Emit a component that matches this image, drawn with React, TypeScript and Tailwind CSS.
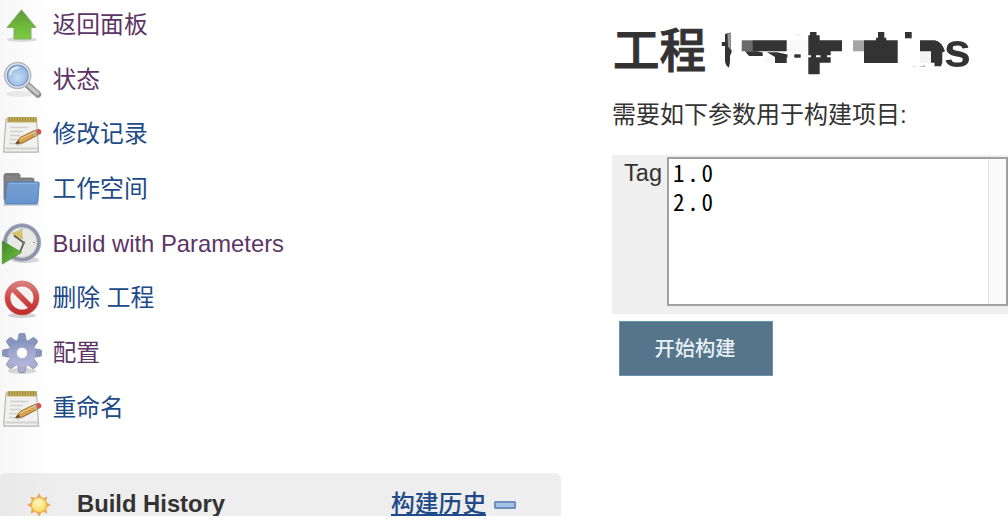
import type { ReactNode } from "react";

type Task = {
  label: string;
  icon: ReactNode;
  visited?: boolean;
};

function UpIcon() {
  return (
    <>
      <defs>
        <linearGradient id="up" x1="0" y1="0" x2="0" y2="1">
          <stop offset="0" stopColor="#5d9a3c" />
          <stop offset="0.5" stopColor="#6cb53a" />
          <stop offset="1" stopColor="#7fcb45" />
        </linearGradient>
      </defs>
      <ellipse cx="22" cy="42.500" rx="15" ry="2.5" fill="#000" opacity="0.13" />
      <path d="M21.5 12.8 36 30.500H31V42H14V30.500H7Z" fill="url(#up)" stroke="#7fae65" strokeWidth="1" strokeLinejoin="round" />
    </>
  );
}

function SearchIcon() {
  return (
    <>
      <defs>
        <radialGradient id="lens" cx="0.5" cy="0.6" r="0.6">
          <stop offset="0" stopColor="#c5dcf4" />
          <stop offset="1" stopColor="#8fb2dd" />
        </radialGradient>
      </defs>
      <ellipse cx="20" cy="43" rx="14" ry="3" fill="#000" opacity="0.07" />
      <path d="M27.500 34 38 43.500" stroke="#929292" strokeWidth="6.5" strokeLinecap="round" />
      <path d="M29 35 37.500 42.500" stroke="#c9c9c9" strokeWidth="3.5" strokeLinecap="round" />
      <circle cx="17.7" cy="24.500" r="13" fill="#e9ecef" stroke="#b4b9be" strokeWidth="1.6" />
      <circle cx="17.7" cy="24.500" r="10.500" fill="url(#lens)" stroke="#7896c3" strokeWidth="1.2" />
      <path d="M10 24Q11 16.500 19 16.500" fill="none" stroke="#e3effb" strokeWidth="2" />
    </>
  );
}

function NotepadIcon() {
  return (
    <>
      <path d="M3 45H39.500V47H3Z" fill="#000" opacity="0.15" />
      <path d="M6 13H36.500L38.500 43.500Q38.500 46 36.500 46H5.500Q3.500 46 3.700 43.500Z" fill="#f1f1f0" stroke="#b3b3b1" strokeWidth="1.1" />
      <path d="M4.500 42.500H38" stroke="#d2d2d0" strokeWidth="2" />
      <path d="M7.500 11H36.500V16.500H7Z" fill="#c5b263" />
      <path d="M8.500 13.500H36.500" stroke="#9c8738" strokeWidth="4.5" strokeDasharray="1.2 1.500" />
      <path d="M10 21.500H28M10 25.500H23M10 29.500H20M9.500 33.500H17M9 37.500H15" stroke="#cfcfcf" strokeWidth="1.3" />
      <path d="M17 39.500 31 32" stroke="#aaa" strokeWidth="2.5" opacity="0.5" />
      <path d="M15.500 38 20 31.500 35.500 24 38 29 22.500 37Z" fill="#d7a04d" stroke="#9d7337" strokeWidth="1" />
      <path d="M20 33 36 25.500" stroke="#efc987" strokeWidth="1.2" />
      <path d="M15.500 38 18.200 34.200 20 37Z" fill="#5d4630" />
      <path d="M34 24.700 36.300 29.700" stroke="#b9b9b9" strokeWidth="2" />
      <path d="M36 24Q39.500 22 41 24.500Q42.500 27.500 38.500 29Z" fill="#d4524a" />
    </>
  );
}

function FolderIcon() {
  return (
    <>
      <defs>
        <linearGradient id="folder" x1="0" y1="0" x2="0" y2="1">
          <stop offset="0" stopColor="#75a0d5" />
          <stop offset="1" stopColor="#6794cd" />
        </linearGradient>
      </defs>
      <path d="M3 43H39V45H3Z" fill="#000" opacity="0.14" />
      <path d="M4 14.500Q4 12.500 6 12.500H18Q20 12.500 20 14.500V17H32Q34 17 34 19V40H6Q4 40 4 38Z" fill="#7d7d7d" stroke="#727272" strokeWidth="0.8" />
      <path d="M5.500 16H18M5.500 19H32" stroke="#909090" strokeWidth="1" />
      <path d="M8.500 21H38Q39.300 21 39.200 22.500L37.800 41.500Q37.700 43 36 43H6Q4.500 43 4.800 41.500L7.200 22.500Q7.300 21 8.500 21Z" fill="url(#folder)" stroke="#5580ba" strokeWidth="1" />
      <path d="M9 22.500H37.500" stroke="#8bb0df" strokeWidth="1" />
    </>
  );
}

function ClockIcon() {
  return (
    <>
      <defs>
        <linearGradient id="play" x1="0" y1="0" x2="1" y2="1">
          <stop offset="0" stopColor="#438529" />
          <stop offset="1" stopColor="#6fc93d" />
        </linearGradient>
      </defs>
      <ellipse cx="25" cy="45" rx="14" ry="3" fill="#000" opacity="0.15" />
      <circle cx="22" cy="27.500" r="17" fill="#e8e8e5" stroke="#8f92ab" strokeWidth="3.6" />
      <circle cx="22" cy="27.500" r="18.700" fill="none" stroke="#a9acc0" strokeWidth="0.8" />
      <circle cx="22" cy="27.500" r="14.800" fill="none" stroke="#c6c6c9" strokeWidth="0.8" />
      <path d="M12 18.500 21.500 15 22.500 24Z" fill="#dcc568" stroke="#c8b45f" strokeWidth="0.7" />
      <path d="M14 20.500 23.500 27.500M24 27.500 20 37" stroke="#5c5c55" strokeWidth="1.800" />
      <circle cx="23.500" cy="27.500" r="1.600" fill="#77766b" />
      <path d="M33 27.500H35M22 13.500V15" stroke="#999" strokeWidth="1.200" />
      <path d="M2.300 26 21.500 37.500 2.300 49Z" fill="url(#play)" stroke="#4b8d34" strokeWidth="0.8" />
    </>
  );
}

function StopIcon() {
  return (
    <>
      <defs>
        <linearGradient id="stop" gradientUnits="userSpaceOnUse" x1="0" y1="10" x2="0" y2="45">
          <stop offset="0" stopColor="#dc8784" />
          <stop offset="0.5" stopColor="#cf4c48" />
          <stop offset="1" stopColor="#bf2a29" />
        </linearGradient>
      </defs>
      <ellipse cx="22" cy="45.500" rx="14" ry="2.500" fill="#000" opacity="0.16" />
      <circle cx="22" cy="28" r="14.300" fill="#f4f2f2" stroke="url(#stop)" strokeWidth="5.500" />
      <path d="M12.500 18.500 31.500 37.500" stroke="url(#stop)" strokeWidth="5.500" />
      <circle cx="22" cy="28" r="17" fill="none" stroke="#c45b58" strokeWidth="0.6" />
    </>
  );
}

const RAYS = [0, 45, 90, 135, 180, 225, 270, 315];

function GearIcon() {
  return (
    <>
      <defs>
        <linearGradient id="gear" gradientUnits="userSpaceOnUse" x1="20" y1="8" x2="24" y2="48">
          <stop offset="0" stopColor="#6d87b5" />
          <stop offset="0.5" stopColor="#a3a9d0" />
          <stop offset="1" stopColor="#b9bbdc" />
        </linearGradient>
      </defs>
      <ellipse cx="22" cy="46" rx="14" ry="3" fill="#000" opacity="0.15" />
      {RAYS.map((angle) => (
        <path
          key={angle}
          d="M17.500 17 18.800 9.500Q19 8.500 20 8.500H24Q25 8.500 25.200 9.500L26.500 17Z"
          transform={`rotate(${angle} 22 28)`}
          fill={angle > 90 && angle < 270 ? "#aaacd1" : "#8796c0"}
          stroke="#8089a8"
          strokeWidth="0.8"
        />
      ))}
      <circle cx="22" cy="28" r="9.700" fill="none" stroke="url(#gear)" strokeWidth="8" />
      <circle cx="22" cy="28" r="5.600" fill="#fff" stroke="#989fbf" strokeWidth="0.8" />
    </>
  );
}

function SunIcon() {
  return (
    <svg viewBox="0 0 26 26" className="mt-0.5 h-[26px] w-[26px] shrink-0">
      <defs>
        <radialGradient id="sun" cx="0.45" cy="0.35" r="0.7">
          <stop offset="0" stopColor="#fffbc4" />
          <stop offset="1" stopColor="#f6d34c" />
        </radialGradient>
      </defs>
      {RAYS.map((angle) => (
        <path key={angle} d="M10.300 6 13 1 15.700 6Z" transform={`rotate(${angle} 13 13)`} fill="#eaa95c" />
      ))}
      <circle cx="13" cy="13" r="7.700" fill="url(#sun)" stroke="#ecaf57" strokeWidth="1.200" />
    </svg>
  );
}

// Project name with most of its letters masked out
function MaskedName() {
  return (
    <svg viewBox="720 20 260 60" className="ml-[14px] h-[60px] w-[260px] shrink-0">
      <path d="M725 34 730.700 32.500V48L731.800 51.500 730 56V62L729 67.500Q725.500 66 725 61V46H721.800V42H725Z" fill="#333" />
      <path d="M727.500 34 730.700 32.700V50L728 46.500Z" fill="#999" />
      <path d="M787 40.300H808V51.300H787ZM764 57H775V63H764Z" fill="#f9f9f9" />
      <path d="M741.700 40.300H753V51.300H741.700Z" fill="#6b6b6b" />
      <path d="M752.700 40.300H786.700V51.300H752.700Z" fill="#333" />
      <path d="M745 51.300H757L762.700 52.500V56H749Z" fill="#333" />
      <path d="M767 52.300H777L787.500 54.500V57.500H786.700V63H775V57Z" fill="#333" />
      <path d="M794.300 54.300H800.700V57.700H794.300Z" fill="#333" />
      <path d="M795 34.500H801V35.300H795Z" fill="#ddd" />
      <path d="M810 32H816.500V35.300H819.700V40.300H842V51.300H830.700V62.700H819.700V74.300H808.300V35.300H810Z" fill="#333" />
      <path d="M808 55.300H811V57.300H808ZM816 55.300H820.500V57.300H816ZM827 55.300H831V57.300H827Z" fill="#fff" />
      <path d="M853 40.300H864V51.300H853Z" fill="#a5a5a5" />
      <path d="M878 32H884.300V37.700H886.300V40.300H897.700V63H864V40.300H876V37.700H878Z" fill="#333" />
      <path d="M905 32H911.700V38.300H905Z" fill="#333" />
      <path d="M920 51.300H931V63H920Z" fill="#f4f4f4" />
      <path d="M920 40.300H935Q942 42 945 51.300L942.300 52.500V62.700L941 66.300H934.500V62.700H931V51.300H920Z" fill="#333" />
      <path d="M918.500 66.500 925 65.500V66.500ZM912 66.500H915V66Z" fill="#777" />
      <text x="943.800" y="67" fontSize="49" fontWeight="700" fill="#333" className="font-['Liberation_Sans',sans-serif]">
        s
      </text>
    </svg>
  );
}

const tasks: Task[] = [
  { label: "返回面板", icon: <UpIcon />, visited: true },
  { label: "状态", icon: <SearchIcon />, visited: true },
  { label: "修改记录", icon: <NotepadIcon /> },
  { label: "工作空间", icon: <FolderIcon /> },
  { label: "Build with Parameters", icon: <ClockIcon />, visited: true },
  { label: "删除 工程", icon: <StopIcon /> },
  { label: "配置", icon: <GearIcon />, visited: true },
  { label: "重命名", icon: <NotepadIcon /> },
];

export default function App() {
  return (
    <div className="h-[530px] w-[1008px] overflow-hidden bg-white font-['Liberation_Sans','Noto_Sans_CJK_SC',sans-serif] text-[#333]">
      <div className="flex h-[516px] overflow-hidden">
        <aside className="w-[612px] shrink-0 bg-[linear-gradient(90deg,#f7f7f7,#fff_48px)]">
          <nav className="-mt-[3.300px] flex flex-col">
            {tasks.map((task) => (
              <a
                key={task.label}
                href="#"
                className={`flex h-[54.700px] items-center gap-[8.500px] text-[23.800px] leading-none whitespace-nowrap ${
                  task.visited ? "text-[#5c3566]" : "text-[#204a87]"
                }`}
              >
                <svg viewBox="0 0 44 54.700" className="h-[54.700px] w-[44px] shrink-0">
                  {task.icon}
                </svg>
                <span className="pt-[1.500px]">{task.label}</span>
              </a>
            ))}
          </nav>

          {/* Build history */}
          <section className="mt-[38.700px] flex h-[62px] w-[561px] items-center rounded-t-[6px] bg-gradient-to-r from-[#e9e9e9] to-[#eeeeee] to-10% pl-[26px] text-[23.800px] leading-none">
            <SunIcon />
            <h2 className="ml-[25px] w-[314px] font-bold">Build History</h2>
            <a
              href="#"
              className="border-b-[3px] border-[#204a87] pt-0.5 leading-[21px] font-medium text-[#204a87]"
            >
              构建历史
            </a>
            <span className="mt-[3px] ml-2 h-[8px] w-[22px] rounded-[1.500px] border-2 border-[#6c8fc0] bg-[#a6c2e3]" />
          </section>
        </aside>

        <main className="min-w-0 flex-1">
          <h1 className="mt-5 flex h-[60px] items-center text-[46.500px] leading-none font-bold whitespace-nowrap">
            <span className="pt-0.5 pl-px font-medium [-webkit-text-stroke:1px_#333]">工程</span>
            <MaskedName />
          </h1>
          <p className="mt-[19px] h-[32px] text-[24px] leading-[32px] whitespace-nowrap">需要如下参数用于构建项目:</p>

          <div className="mt-6 flex h-[159px] bg-[#efefef] pt-[2px]">
            <label htmlFor="tag" className="w-[55px] shrink-0 pr-[5px] text-right text-[23.500px] leading-[33px]">
              Tag
            </label>
            <div
              id="tag"
              className="flex h-[149px] w-[341px] justify-between border-2 border-[#a0a0a0] bg-white font-['Noto_Sans_Mono_CJK_SC','Liberation_Mono',monospace] text-[23px] leading-[29px] tracking-[2.700px] text-black"
            >
              <ul className="-mt-px pl-1">
                <li>1.0</li>
                <li>2.0</li>
              </ul>
              <div className="w-[18px] border-l border-[#e2e2e2] bg-[#fafafa]" />
            </div>
          </div>

          <button
            type="button"
            className="mt-[7px] ml-[7px] flex h-[55px] w-[154px] items-center justify-center border border-[#6c94ac] bg-[#54758a] pt-0.5 pr-0.5 text-[20.300px] leading-none font-medium text-[#e8f0f7]"
          >
            开始构建
          </button>
        </main>
      </div>
    </div>
  );
}
